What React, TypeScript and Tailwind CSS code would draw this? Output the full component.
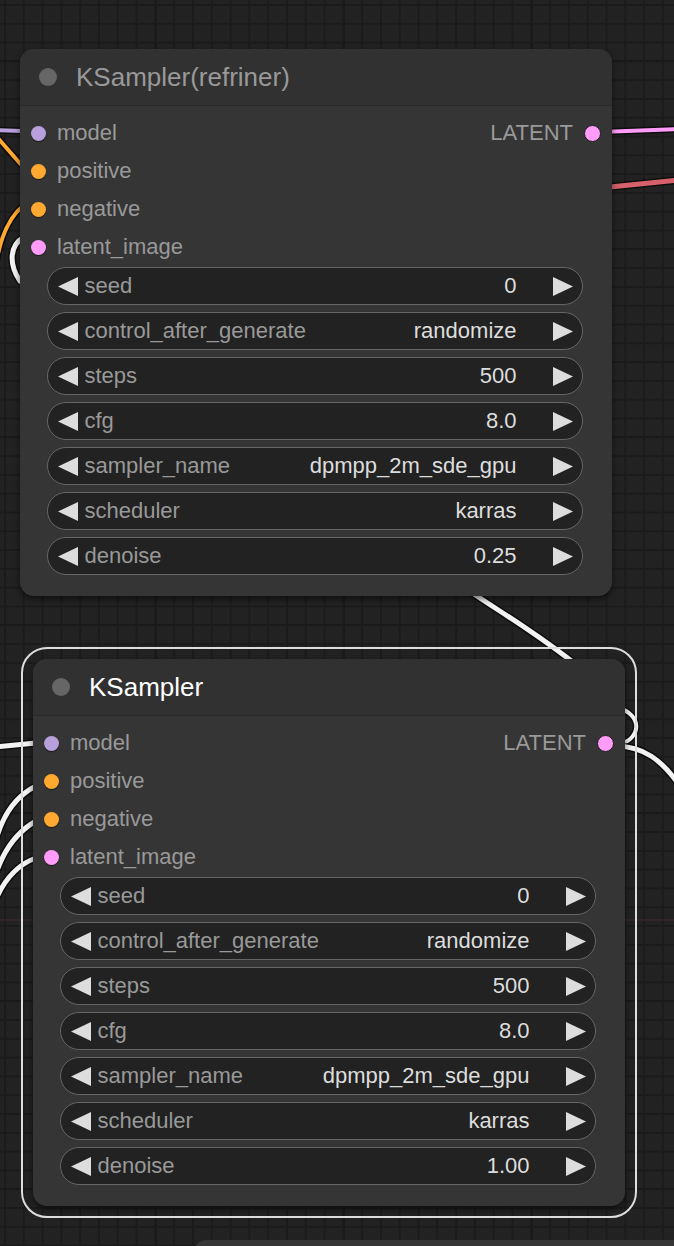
import React from 'react';

const slots = [
  { name: 'model', color: 'bg-[#b7a0dc]' },
  { name: 'positive', color: 'bg-[#ffa931]' },
  { name: 'negative', color: 'bg-[#ffa931]' },
  { name: 'latent_image', color: 'bg-[#ff9cf9]' },
];

function widgetsFor(denoise: string) {
  return [
    { label: 'seed', value: '0' },
    { label: 'control_after_generate', value: 'randomize' },
    { label: 'steps', value: '500' },
    { label: 'cfg', value: '8.0' },
    { label: 'sampler_name', value: 'dpmpp_2m_sde_gpu' },
    { label: 'scheduler', value: 'karras' },
    { label: 'denoise', value: denoise },
  ];
}

function Arrow({ dir }: { dir: 'left' | 'right' }) {
  return (
    <svg width="20" height="19" viewBox="0 0 20 19" className="shrink-0">
      <polygon points={dir === 'left' ? '20,0 20,19 0,9.5' : '0,0 0,19 20,9.5'} fill="#dddddd" />
    </svg>
  );
}

function Widget({ label, value }: { label: string; value: string }) {
  return (
    <div className="flex h-[38px] items-center rounded-full border-[1.5px] border-[#666666] bg-[#222222] pl-[9.5px] pr-[9.5px]">
      <Arrow dir="left" />
      <span className="ml-[7px] flex-1 text-[22px] leading-none text-[#999999]">{label}</span>
      <span className="text-[22px] leading-none text-[#dddddd]">{value}</span>
      <span className="ml-[36px] flex">
        <Arrow dir="right" />
      </span>
    </div>
  );
}

function KSamplerNode({ title, selected, denoise }: { title: string; selected?: boolean; denoise: string }) {
  return (
    <div className="flex w-[592px] flex-col rounded-[14px] bg-[#353535] shadow-[0_3px_6px_rgba(0,0,0,0.55)]">
      {/* Title */}
      <div className="flex h-[57px] items-center rounded-t-[14px] border-b border-[#2a2a2a] bg-[#313131] pl-[18.5px]">
        <span className="h-[18px] w-[18px] rounded-full bg-[#666666]" />
        <span className={`ml-[19.5px] text-[26px] leading-none ${selected ? 'text-white' : 'text-[#999999]'}`}>
          {title}
        </span>
      </div>

      {/* Slots + widgets */}
      <div className="flex flex-col pt-[8px] pb-[21px]">
        {slots.map((s, i) => (
          <div key={s.name} className="flex h-[38px] items-center pl-[10.5px] pr-[11px]">
            <span className={`h-[15px] w-[15px] rounded-full ${s.color} shadow-[0_1px_1px_rgba(0,0,0,0.5)]`} />
            <span className="ml-[11.5px] flex-1 text-[22px] leading-none text-[#999999]">{s.name}</span>
            {i === 0 && (
              <>
                <span className="text-[22px] leading-none text-[#999999]">LATENT</span>
                <span className="ml-[11px] h-[17px] w-[17px] rounded-full border-[1.5px] border-[#1e1e1e] bg-[#ff9cf9]" />
              </>
            )}
          </div>
        ))}
        <div className="ml-[27px] mr-[29px] mt-[1px] flex flex-col gap-[7px]">
          {widgetsFor(denoise).map((w) => (
            <Widget key={w.label} label={w.label} value={w.value} />
          ))}
        </div>
      </div>
    </div>
  );
}

function Wire({ d, color, width = 4 }: { d: string; color: string; width?: number }) {
  return (
    <>
      <path d={d} stroke="rgba(0,0,0,0.6)" strokeWidth={width + 3} fill="none" strokeLinecap="round" />
      <path d={d} stroke={color} strokeWidth={width} fill="none" strokeLinecap="round" />
    </>
  );
}

export default function App() {
  return (
    <div
      className="relative h-[1246px] w-[674px] overflow-hidden bg-[#222222] bg-[image:linear-gradient(to_right,#1a1a1a_1.5px,transparent_1.5px),linear-gradient(to_bottom,#1a1a1a_1.5px,transparent_1.5px),linear-gradient(to_right,#1b1b1b_1.5px,transparent_1.5px),linear-gradient(to_bottom,#1b1b1b_1.5px,transparent_1.5px)] bg-[size:188px_188px,188px_188px,18.8px_18.8px,18.8px_18.8px] bg-[position:155px_60px,155px_60px,4px_4px,4px_4px]"
      style={{ fontFamily: '"Liberation Sans", Arial, sans-serif' }}
    >
      {/* Links */}
      <svg className="absolute left-0 top-0" width="674" height="1246" viewBox="0 0 674 1246">
        <line x1="0" y1="920" x2="674" y2="920" stroke="#3a2a2f" strokeWidth="1" />
        <Wire d="M-5 130 L22 131" color="#b7a0dc" />
        <Wire d="M-4 136 L24 168" color="#ffa931" />
        <Wire d="M-3 259 Q 4 221 24 205" color="#ffa931" />
        <Wire d="M24 237 C 10 245, 8 263, 20 281" color="#f2f2f2" width={5} />
        <Wire d="M600 132 L680 129" color="#ff9cf9" />
        <Wire d="M610 187 L680 180" color="#d6606c" width={5} />
        <Wire d="M468 590 C 500 612, 540 635, 580 668" color="#f2f2f2" width={5} />
        <Wire d="M618 708 C 642 714, 642 738, 620 744" color="#f2f2f2" />
        <Wire d="M615 746 C 642 746, 662 758, 684 792" color="#f2f2f2" width={5} />
        <Wire d="M-5 747 L36 743" color="#f2f2f2" width={5} />
        <Wire d="M-6 848 Q 4 802 36 786" color="#f2f2f2" width={5} />
        <Wire d="M-6 880 Q 6 838 36 821" color="#f2f2f2" width={5} />
        <Wire d="M-6 904 Q 8 868 36 858" color="#f2f2f2" width={5} />
      </svg>

      {/* Nodes */}
      <div className="absolute left-[20px] top-[49px]">
        <KSamplerNode title="KSampler(refriner)" denoise="0.25" />
      </div>

      <div className="absolute left-[21px] top-[647px] rounded-[26px] border-2 border-[#dddddd] p-[10px]">
        <KSamplerNode title="KSampler" selected denoise="1.00" />
      </div>

      <div className="absolute left-[193px] top-[1240px] h-[40px] w-[520px] rounded-tl-[14px] bg-[#353535]" />
    </div>
  );
}
